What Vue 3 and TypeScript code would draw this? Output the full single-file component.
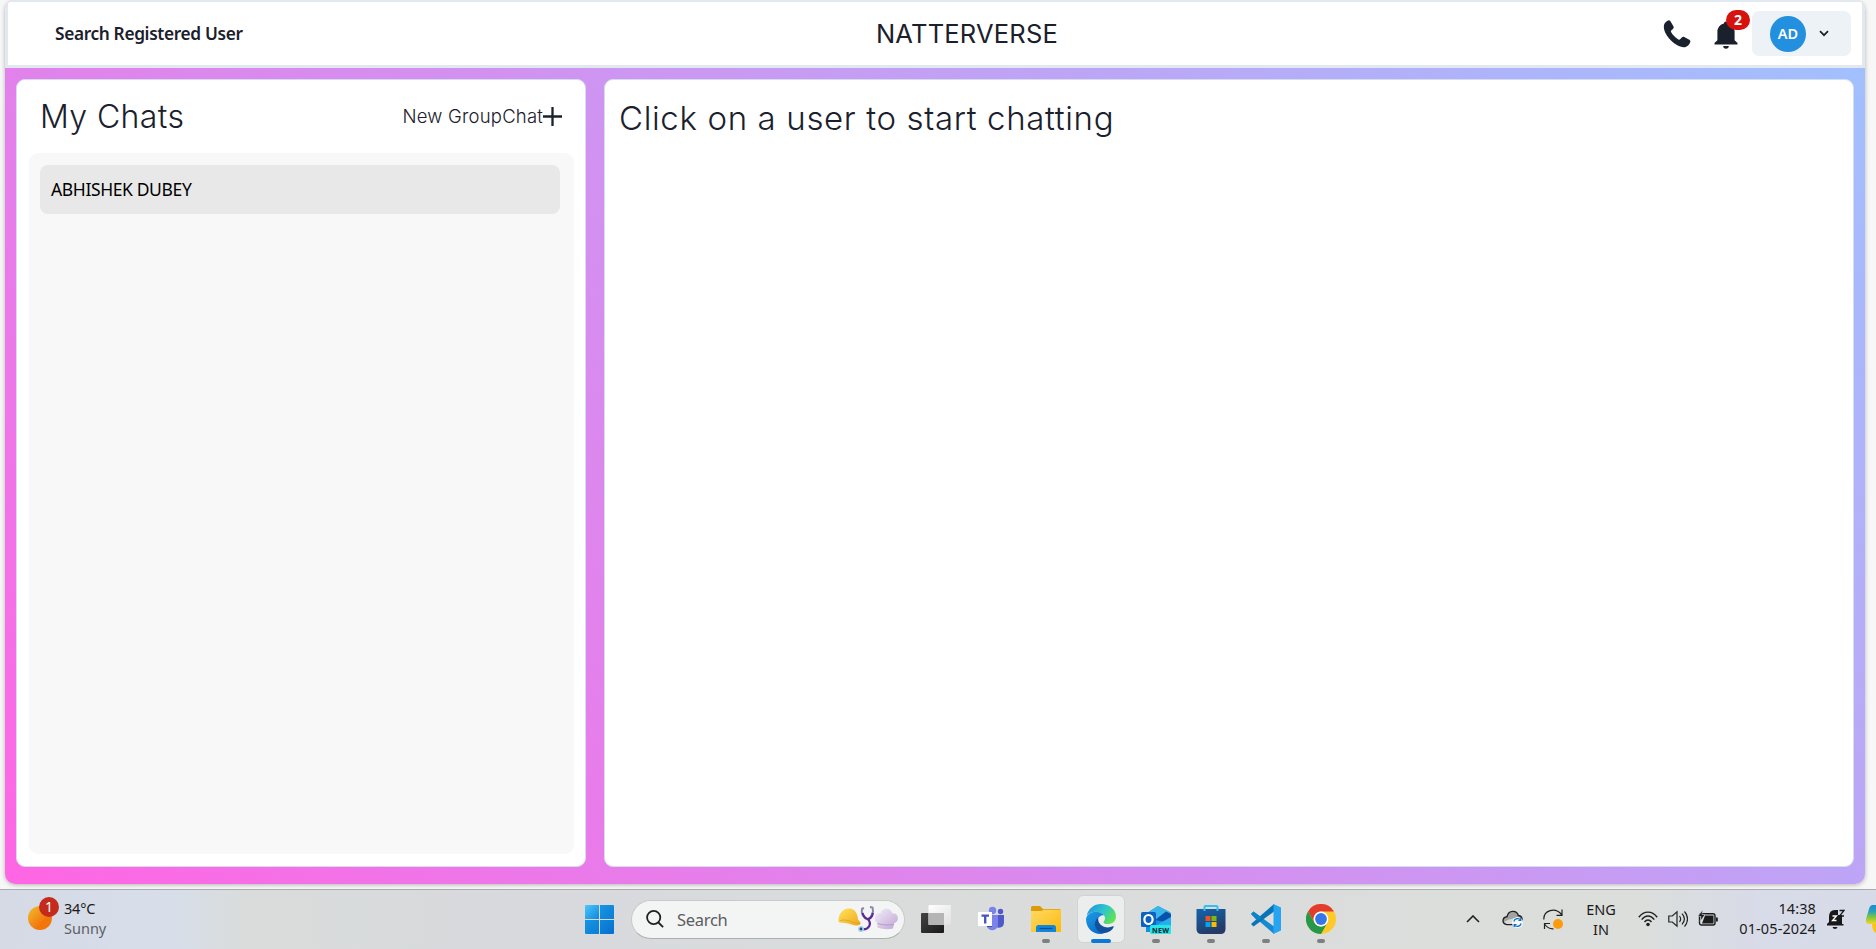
<script setup lang="ts">
interface TaskApp {
  name: string
  running: boolean
  active?: boolean
}

const chats: string[] = ['ABHISHEK DUBEY']
const notifications = 2

const apps: TaskApp[] = [
  { name: 'view', running: false },
  { name: 'teams', running: false },
  { name: 'folder', running: true },
  { name: 'edge', running: true, active: true },
  { name: 'outlook', running: true },
  { name: 'store', running: true },
  { name: 'code', running: true },
  { name: 'chrome', running: true },
]
</script>

<template>
  <div class="screen">
    <div class="window">
      <header class="topbar">
        <span class="search-user">Search Registered User</span>
        <h1 class="brand">NATTERVERSE</h1>
        <div class="actions">
          <svg class="phone" viewBox="0 0 28 28"><path d="M1.2 4.2C1.8 2.6 4.2.4 5.9.3c1 0 1.6.9 2 1.8l2.6 4.4c.4.9.1 1.8-.6 2.4L8.2 10.500c-.5.5-.5 1 0 1.700 1.800 3 4.200 5.400 7.200 7.200.7.4 1.200.4 1.700-.1l1.700-1.900c.6-.7 1.500-.9 2.400-.5l5.100 2.800c1 .6 1.300 1.500.9 2.600-.6 2-2.600 4.100-4.600 4.700-2.300.6-5.800-.1-9.500-2.400-3.600-2.200-6.900-5.500-9.400-9.300C1.100 11.100.2 7 1.200 4.200z" /></svg>
          <div class="bell-wrap">
            <svg class="bell" viewBox="0 0 24 28"><path d="M12 .5c-1.300 0-2 .8-2 1.900C6 3.300 3.400 6.600 3.400 10.800v8.400L.5 22.100v1.300h23v-1.300l-2.900-2.900v-8.400c0-4.200-2.600-7.500-6.600-8.400 0-1.100-.7-1.900-2-1.900zM9.200 25h5.600c0 1.700-1.100 2.700-2.800 2.700S9.200 26.700 9.200 25z" /></svg>
            <span class="count">{{ notifications }}</span>
          </div>
          <button class="profile">
            <span class="avatar">AD</span>
            <svg class="chev" viewBox="0 0 10 7"><path d="M1 1.200l4 4 4-4" /></svg>
          </button>
        </div>
      </header>
      <main class="content">
        <section class="panel chats">
          <div class="chats-head">
            <h2>My Chats</h2>
            <button class="new-group">
              <span>New GroupChat</span>
              <svg viewBox="0 0 19 19"><path d="M9.500 0v19M0 9.500h19" /></svg>
            </button>
          </div>
          <div class="chat-list">
            <div v-for="chat in chats" :key="chat" class="chat-item"><span>{{ chat }}</span></div>
          </div>
        </section>
        <section class="panel conversation">
          <p>Click on a user to start chatting</p>
        </section>
      </main>
    </div>

    <footer class="taskbar">
      <div class="weather">
        <div class="sun"><span class="alert">1</span></div>
        <div class="forecast"><span class="temp">34°C</span><span class="sky">Sunny</span></div>
      </div>

      <div class="dock">
        <svg class="start" viewBox="0 0 29 29">
          <defs><linearGradient id="win" x1="0" y1="0" x2="1" y2="1" gradientUnits="objectBoundingBox"><stop offset="0" stop-color="#4cc8fb" /><stop offset="1" stop-color="#0f86dc" /></linearGradient>
          <linearGradient id="win2" x1="0" y1="0" x2="1" y2="1"><stop offset="0" stop-color="#1fa2e8" /><stop offset="1" stop-color="#0470cf" /></linearGradient></defs>
          <path fill="url(#win)" d="M1 0h13v14H0V1q0-1 1-1z" /><path fill="url(#win2)" d="M15 0h13q1 0 1 1v13H15zM0 15h14v14H1q-1 0-1-1zM15 15h14v13q0 1-1 1H15z" />
        </svg>
        <div class="search">
          <svg class="lens" viewBox="0 0 18 18"><circle cx="7.700" cy="7.500" r="6.600" /><path d="M12.400 12.500l4.700 4.700" /></svg>
          <span>Search</span>
          <svg class="doodle" viewBox="0 0 60 28">
            <defs>
              <linearGradient id="hat" x1="0" y1="0" x2="1" y2="1"><stop offset="0" stop-color="#ffe45c" /><stop offset="1" stop-color="#efa61b" /></linearGradient>
              <linearGradient id="chef" x1="0" y1="0" x2="1" y2="1"><stop offset="0" stop-color="#f5eef9" /><stop offset="1" stop-color="#bda5d4" /></linearGradient>
            </defs>
            <path fill="url(#hat)" d="M.5 17C0 9 5 3 11.500 3.500c5.500.2 8.300 5.500 8.500 11 1.500 1.500 3 3 2.500 4.500-2 2-6 1.800-9 .5C9 17.600 5 18.500.5 17z" />
            <path fill="none" stroke="#d6931c" stroke-width=".6" d="M2 15.500c4-1 8-.5 12 1.500 3 1.200 6 1.200 8 1.500" />
            <path fill="none" stroke="#8d83a8" stroke-width="2" d="M26 3l-2 .8c-1 4 1 9 5.500 10.500C34 12.500 36 7 34.500 2.500L32 2" />
            <path fill="none" stroke="#5a2a9b" stroke-width="2.200" d="M24.500 8c1 3.500 3 5.500 5.500 6.300 2.500-1 4.500-3.500 4.800-6.500M30 14c4 5 1 11-6 10.300" />
            <circle cx="23" cy="24" r="3" fill="#a9d3ee" /><circle cx="23" cy="24" r="1.400" fill="#204b7c" />
            <path fill="url(#chef)" d="M39.500 22.500l-.3-5C36.200 16.500 36 12 38.300 9.500c1.200-1.400 3-1.700 4.300-1.300C43.500 4.800 46.500 3 50 4c2 .6 3.600 2 4.200 4.200 3.200-.3 5.600 1.700 5.700 4.700.1 2.500-1.500 4.600-3.700 5L55 23.500c-5 1.200-10.500.7-15.500-1z" />
            <path fill="none" stroke="#aa8fc4" stroke-width=".8" d="M39.400 18.500c5.500 1.700 11 1.900 16.600.9" />
          </svg>
        </div>

        <div v-for="app in apps" :key="app.name" class="app" :class="{ active: app.active }">
          <svg v-if="app.name === 'view'" viewBox="0 0 30 30">
            <defs><linearGradient id="v1" x1="0" y1="0" x2="1" y2="1"><stop offset="0" stop-color="#444" /><stop offset="1" stop-color="#191919" /></linearGradient>
            <linearGradient id="v2" x1="0" y1="0" x2="1" y2="1"><stop offset="0" stop-color="#fff" /><stop offset="1" stop-color="#e0e0e0" /></linearGradient></defs>
            <rect x="0" y="9" width="23" height="20" rx="1" fill="url(#v1)" /><rect x="7.500" y="1" width="22.500" height="20" rx="1" fill="url(#v2)" /><path d="M7.500 9H23v12H7.500z" fill="#b5b5b5" />
          </svg>
          <svg v-else-if="app.name === 'teams'" viewBox="0 0 30 30">
            <circle cx="16.500" cy="6.500" r="3.700" fill="#7b83eb" /><circle cx="24.500" cy="7.500" r="2.700" fill="#5059c9" />
            <path d="M19 11h9v8a4.800 4.800 0 0 1-8 3.500z" fill="#5059c9" /><path d="M10 11h12v9.500a5.800 5.800 0 0 1-11.500 1z" fill="#7b83eb" />
            <path d="M14 11h2v12h-5z" fill="#454a9b" /><rect x="2" y="8" width="14" height="14" fill="#fff" /><path d="M5.500 10.500h7.500v2.300h-2.600V19.500H8v-6.700H5.500z" fill="#4b53bc" />
          </svg>
          <svg v-else-if="app.name === 'folder'" viewBox="0 0 30 30">
            <defs><linearGradient id="fo" x1="0" y1="0" x2="1" y2="1"><stop offset="0" stop-color="#ffda65" /><stop offset="1" stop-color="#fdb90b" /></linearGradient></defs>
            <path d="M0 3.500Q0 2 1.500 2H9l3 3h16.500Q30 5 30 6.500V12H0z" fill="#dd9b08" /><path d="M0 7h10l3-1.300h17V28H0z" fill="url(#fo)" />
            <path d="M5 28v-4.500Q5 21 7.500 21h15q2.500 0 2.500 2.500V28z" fill="#1386d9" /><path d="M8.500 24.500h13" stroke="#0b4f91" stroke-width="1.300" />
          </svg>
          <svg v-else-if="app.name === 'edge'" viewBox="0 0 30 30">
            <defs><linearGradient id="e1" x1="0" y1=".2" x2="1" y2=".7"><stop offset="0" stop-color="#2493df" /><stop offset=".5" stop-color="#2cc4d0" /><stop offset="1" stop-color="#65e548" /></linearGradient>
            <linearGradient id="e2" x1="0" y1="0" x2=".7" y2="1"><stop offset="0" stop-color="#1e9de5" /><stop offset="1" stop-color="#0669c8" /></linearGradient></defs>
            <path d="M.7 11.500C2.500 4.500 8 0 15 0c8.500 0 15 5.500 15 12.500 0 5-3.800 7.500-8.200 7.500-3 0-5-1.200-4-2.600 1.500-2 1.700-4.300.2-6C14 6.500 5.500 6.500.7 11.500z" fill="url(#e1)" />
            <path d="M0 15C1.500 7 13.500 5.500 18 11.400c-3-.6-6.700 2-6.700 6C11.300 23 15 27 21 27c-2 2-4 3-6.500 3C6 30 0 23.500 0 15z" fill="url(#e2)" />
            <path d="M12.500 13.500c-3 2-4.500 6-3 9.500 1.700 4.200 5.500 6.600 9.500 6 4-.5 7.300-3 8.700-6 .3-.7-.2-1-.8-.7-6 2.700-12.500.2-14.200-4.500-.6-1.700-.7-3.100-.2-4.300z" fill="#124f9d" />
          </svg>
          <svg v-else-if="app.name === 'outlook'" viewBox="0 0 30 30">
            <path d="M5 9.500L17 2l12.500 6.500v17L26 28H5z" fill="#1490df" /><path d="M8 8l9-6 12.500 6.500L16 16z" fill="#38b7ed" /><path d="M14 16L25 7.500l5 2.500v9z" fill="#0753ab" /><path d="M14 22L30 13v14H14z" fill="#28aeee" />
            <rect y="8" width="15" height="15" rx="1.500" fill="#0d61bf" /><ellipse cx="7.500" cy="15.500" rx="4.100" ry="4.500" fill="none" stroke="#fff" stroke-width="2.200" />
            <rect x="9" y="21" width="21" height="9" rx="1.500" fill="#28e6e3" /><text x="19.500" y="28.500" text-anchor="middle" textLength="17">NEW</text>
          </svg>
          <svg v-else-if="app.name === 'store'" viewBox="0 0 30 30">
            <defs><linearGradient id="st" x1="0" y1="0" x2=".4" y2="1"><stop offset="0" stop-color="#1265ad" /><stop offset="1" stop-color="#253a67" /></linearGradient></defs>
            <path d="M.5 5h29v20q0 5-5 5h-19q-5 0-5-5z" fill="url(#st)" /><path d="M8.500 7V3q0-1 1-1h11q1 0 1 1v4" fill="none" stroke="#35bff0" stroke-width="2" />
            <path d="M9.500 12h5v5h-5z" fill="#f25022" /><path d="M15.500 12h5v5h-5z" fill="#7fba00" /><path d="M9.500 18h5v5h-5z" fill="#00a4ef" /><path d="M15.500 18h5v5h-5z" fill="#ffb900" />
          </svg>
          <svg v-else-if="app.name === 'code'" viewBox="0 0 30 30">
            <path d="M0 10l2.500-2.500L23 22.500V30z" fill="#168ad0" /><path d="M0 20l2.500 2.500L23 7.500V0z" fill="#0875b8" /><path d="M0 10l2.500-2.500 8 6-4 3.500z" fill="#0e83c8" /><path d="M22.500 0L30 3.500v23L22.500 30z" fill="#28a5f2" />
          </svg>
          <svg v-else viewBox="0 0 30 30">
            <circle cx="15" cy="15" r="15" fill="#ffc928" /><path d="M2 7.500A15 15 0 0 1 28 7.500H15a7.500 7.500 0 0 0-6.500 11.250z" fill="#e33b2e" />
            <path d="M2 7.500A15 15 0 0 0 15 30l6.500-11.250a7.500 7.500 0 0 1-13 0z" fill="#25984a" /><circle cx="15" cy="15" r="7.400" fill="#fff" /><circle cx="15" cy="15" r="5.900" fill="#3577e8" />
          </svg>
          <i v-if="app.running" class="mark" />
        </div>
      </div>

      <div class="tray">
        <div class="slot"><svg class="line" width="14" height="8" viewBox="0 0 14 8"><path stroke-width="1.600" d="M1 7l6-6 6 6" /></svg></div>
        <div class="slot"><svg width="22" height="18" viewBox="0 0 22 18">
          <path d="M5 14.500C-.5 14 0 7 5 6.700 6.500-.5 15 0 16.300 5.500c4 .3 5 5 2.500 7.500L16 14.500z" fill="#a2a4a4" stroke="#222" stroke-width="1.400" /><path d="M2 12c4-2 8-4 14-4v6H5z" fill="#d9dbdb" />
          <circle cx="15.500" cy="12.500" r="5.500" fill="#f4f8fb" /><path d="M11.800 11.500a4 4 0 0 1 7-1.300m0-2.200v2.500h-2.300M19.200 13.500a4 4 0 0 1-7 1.300m0 2.200v-2.500h2.300" fill="none" stroke="#0b6fc2" stroke-width="1.200" />
        </svg></div>
        <div class="slot"><svg class="line" width="20" height="21" viewBox="0 0 20 21"><path stroke-width="1.200" d="M.8 10.500C.5 1.500 12-2.500 18.500 5.500M19 .5v5.800h-5.500M1.500 20v-5.500H7M1.500 15c2 3 5 5 9 4.800" /><circle cx="15" cy="15" r="5" fill="#fb9a0b" stroke="none" /></svg></div>
        <div class="lang"><span>ENG</span><span>IN</span></div>
        <div class="slot small"><svg class="line" width="20" height="16" viewBox="0 0 20 16"><path stroke-width="1.400" d="M.8 6.200C6-.6 14-.6 19.200 6.200M3.700 8.600c3.700-4.800 8.900-4.800 12.600 0M6.500 11c2-2.700 5-2.700 7 0" /><circle cx="10" cy="13.500" r="1.800" fill="#222" stroke="none" /></svg></div>
        <div class="slot small"><svg class="line" width="20" height="18" viewBox="0 0 20 18"><path stroke-width="1.200" d="M.8 6h3.500L9 1.800v14.400L4.300 12H.8zM11.500 6c1.500 2 1.500 4 0 6M14 3.700c3 3.300 3 7.300 0 10.600M16.500 1.500c4 4.500 4 10.500 0 15" /></svg></div>
        <div class="slot small"><svg width="20" height="18" viewBox="0 0 20 18"><rect x="1.500" y="3.700" width="15.500" height="11.300" rx="2" fill="none" stroke="#1b1b1b" stroke-width="1.400" /><path d="M7 5.500h8.500v8H4zM18 7.500h1.800v4H18z" fill="#1b1b1b" /><path d="M4.500 0L0 6.500h3l-1 5 5-7H4z" fill="#1b1b1b" stroke="#d8dbe0" stroke-width=".5" /></svg></div>
        <div class="clock"><span>14:38</span><span>01-05-2024</span></div>
        <div class="slot"><svg class="quiet" width="18" height="20" viewBox="0 0 18 20"><path d="M2 8q0-7 6-7h3v5h4v9h1.500v1.500H0V15l2-2zM5.500 18h5q-.5 2-2.500 2t-2.500-2z" fill="#191919" /><path d="M5.500 7h4L5.500 11.500h4" fill="none" stroke="#fff" stroke-width="1.300" /><path d="M12.500 1.500h4.500L12.500 7H17" fill="none" stroke="#191919" stroke-width="1.300" /></svg></div>
        <svg class="copilot" width="10" height="28" viewBox="0 0 10 28"><defs><linearGradient id="co" x1="0" y1="0" x2="0" y2="1"><stop offset="0" stop-color="#168bdc" /><stop offset=".35" stop-color="#2aa3b0" /><stop offset=".65" stop-color="#83c63e" /><stop offset="1" stop-color="#f4d625" /></linearGradient></defs><path d="M10 0H7Q4 0 3 4L0 14q-.6 5 3 5h7z" fill="url(#co)" /><path d="M6 19h4v9Q6.500 27 6 19z" fill="#ffc313" /></svg>
      </div>
    </footer>
  </div>
</template>

<style>
body { margin: 0; overflow: hidden; }
</style>

<style scoped>
* { box-sizing: border-box; }
.screen { width: 1876px; height: 949px; background: #f7f7f7; overflow: hidden; font-family: "Noto Sans", sans-serif; color: #1a202c; display: flex; flex-direction: column; }
.window { width: 1860px; height: 884px; margin: 0 0 5px 5px; flex: none; border-radius: 10px; overflow: hidden; background: linear-gradient(45deg, #ff66e3, #9fc2ff); box-shadow: 0 1px 4px rgba(0, 0, 0, .28); display: flex; flex-direction: column; }
.topbar { height: 68px; border: solid #e2e8f0; border-width: 2px 3px 3px; background: #fff; display: grid; grid-template-columns: 1fr auto 1fr; align-items: center; padding: 0 11px 0 47px; }
.search-user { font-size: 17.300px; font-weight: 600; line-height: 24px; letter-spacing: -.35px; padding-top: 1px; }
.brand { margin: 0 0 0 28px; font: 400 25.500px/34px Inter, sans-serif; letter-spacing: .2px; }
.actions { display: flex; justify-content: flex-end; align-items: center; height: 45px; }
.phone { width: 28px; height: 28px; fill: #1a202c; margin-right: 23px; }
.bell-wrap { position: relative; width: 24px; height: 28px; margin: 2px 14px 0 0; }
.bell { width: 24px; height: 28px; fill: #1a202c; display: block; }
.count { position: absolute; left: 12px; top: -11px; width: 24px; height: 20px; border-radius: 10px; background: #d6120e; color: #fff; font-size: 14px; font-weight: 700; line-height: 20px; text-align: center; }
.profile { width: 99px; height: 45px; border: 0; border-radius: 7px; background: #edf2f7; display: flex; align-items: center; padding: 0 22px 0 18px; justify-content: space-between; }
.avatar { width: 36px; height: 36px; border-radius: 50%; background: #238fdf; color: #fff; font: 600 14.500px/35px "Noto Sans", sans-serif; text-align: center; }
.chev { width: 10px; height: 7px; fill: none; stroke: #1a202c; stroke-width: 1.700; }
.content { flex: 1; display: flex; justify-content: space-between; padding: 11px 11px 17px; }
.panel { background: #fff; border: 1px solid #d3dfee; border-radius: 9px; }
.chats { width: 570px; padding: 10px 11px 12px 12px; display: flex; flex-direction: column; }
.chats-head { height: 63px; flex: none; display: flex; justify-content: space-between; align-items: flex-start; padding: 5px 12px 0 11px; }
h2 { margin: 0; font: 300 32px/44px Inter, sans-serif; letter-spacing: .4px; }
.new-group { border: 0; background: none; padding: 0; margin-top: 12px; display: flex; align-items: center; color: #1a202c; font: 300 18.500px/20px Inter, sans-serif; letter-spacing: .2px; }
.new-group span { margin-top: -2px; }
.new-group svg { width: 19px; height: 19px; stroke: #1a202c; stroke-width: 2.300; }
.chat-list { flex: 1; background: #f8f8f8; border-radius: 9px; padding: 12px 14px 0 11px; }
.chat-item { height: 49px; border-radius: 8px; background: #e8e8e8; color: #000; font-size: 17.500px; line-height: 48px; padding-left: 11px; letter-spacing: -.38px; }
.conversation { width: 1250px; padding: 15px 14px; }
.conversation p { margin: 0; font: 300 33px/46px Inter, sans-serif; letter-spacing: .64px; }

.taskbar { height: 60px; border-top: 1px solid #a9abae; background: linear-gradient(90deg, #d5dae5 0, #d7deea 170px, #d9dcda 245px, #d7d9dd 520px, #d9dcdb 900px, #dbdedb 1640px, #d8dbe8 1760px, #d7dbe8 100%); display: grid; grid-template-columns: 585px 868px 1fr; overflow: hidden; }
.weather { display: flex; padding-left: 28px; }
.sun { position: relative; width: 24px; height: 24px; margin-top: 16px; border-radius: 50%; background: linear-gradient(135deg, #efc02f, #f3760d 65%); }
.alert { position: absolute; left: 11px; top: -9px; width: 20px; height: 20px; border-radius: 50%; background: #c42b1c; color: #fff; font-size: 14px; line-height: 20px; text-align: center; }
.forecast { display: flex; flex-direction: column; margin: 8px 0 0 12px; font-size: 14.500px; line-height: 20px; }
.temp { color: #1b1b1b; letter-spacing: -.2px; }
.sky { color: #5d6065; }
.dock { display: flex; align-items: center; padding-bottom: 1px; }
.start { width: 29px; height: 29px; flex: none; }
.search { width: 274px; height: 39px; margin: 0 6px 0 17px; flex: none; border-radius: 20px; background: #f3f4f4; border: 1px solid #c9cbcb; border-bottom-color: #aeb0b0; display: flex; align-items: center; color: #5c5e5e; font-size: 16.500px; }
.search span { letter-spacing: -.3px; }
.lens { width: 18px; height: 18px; margin: 0 13px 0 14px; fill: none; stroke: #202020; stroke-width: 1.800; }
.doodle { width: 60px; height: 28px; margin-left: auto; margin-right: 6px; }
.app { width: 48px; height: 48px; flex: none; margin-right: 7px; border: 1px solid transparent; border-radius: 6px; position: relative; display: flex; align-items: center; justify-content: center; }
.search + .app { margin-left: 1px; }
.app.active { background: #eceeed; border-color: #d0d3d1; }
.app svg { width: 30px; height: 30px; }
.app text { font: 700 7px "Noto Sans", sans-serif; fill: #06203a; }
.mark { position: absolute; left: 19px; bottom: -1px; width: 8px; height: 4px; border-radius: 2px; background: #7e807f; }
.active .mark { left: 13px; width: 20px; background: #0a78d4; }
.tray { display: flex; align-items: center; color: #1b1b1b; font-size: 14.500px; line-height: 20px; padding-bottom: 1px; }
.slot { width: 40px; display: flex; justify-content: center; align-items: center; flex: none; }
.slot.small { width: 30px; }
.line { fill: none; stroke: #222; }
.lang { width: 56px; margin-right: 4px; display: flex; flex-direction: column; align-items: center; }
.clock { width: 93px; display: flex; flex-direction: column; align-items: flex-end; margin-top: -2px; letter-spacing: .1px; }
.copilot { margin-left: 10px; flex: none; }
</style>
